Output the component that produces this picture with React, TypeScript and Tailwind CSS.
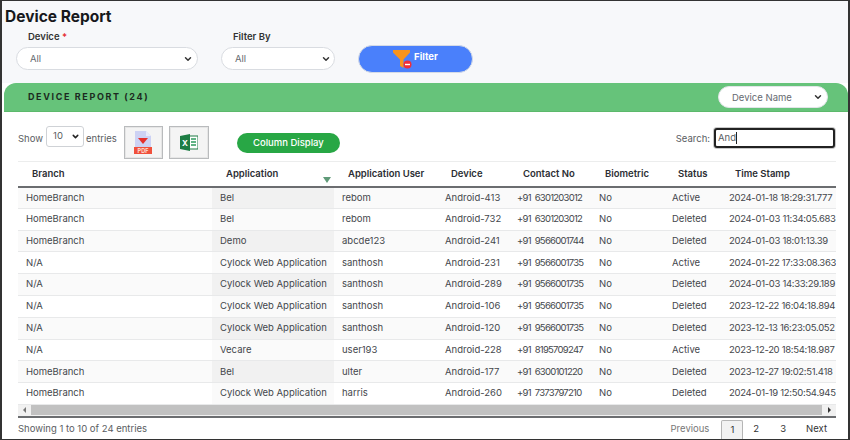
import { ChevronDown } from 'lucide-react'

const rows = [
  ['HomeBranch', 'Bel', 'rebom', 'Android-413', '+91 6301203012', 'No', 'Active', '2024-01-18 18:29:31.777'],
  ['HomeBranch', 'Bel', 'rebom', 'Android-732', '+91 6301203012', 'No', 'Deleted', '2024-01-03 11:34:05.683'],
  ['HomeBranch', 'Demo', 'abcde123', 'Android-241', '+91 9566001744', 'No', 'Deleted', '2024-01-03 18:01:13.39'],
  ['N/A', 'Cylock Web Application', 'santhosh', 'Android-231', '+91 9566001735', 'No', 'Active', '2024-01-22 17:33:08.363'],
  ['N/A', 'Cylock Web Application', 'santhosh', 'Android-289', '+91 9566001735', 'No', 'Deleted', '2024-01-03 14:33:29.189'],
  ['N/A', 'Cylock Web Application', 'santhosh', 'Android-106', '+91 9566001735', 'No', 'Deleted', '2023-12-22 16:04:18.894'],
  ['N/A', 'Cylock Web Application', 'santhosh', 'Android-120', '+91 9566001735', 'No', 'Deleted', '2023-12-13 16:23:05.052'],
  ['N/A', 'Vecare', 'user193', 'Android-228', '+91 8195709247', 'No', 'Active', '2023-12-20 18:54:18.987'],
  ['HomeBranch', 'Bel', 'ulter', 'Android-177', '+91 6300101220', 'No', 'Deleted', '2023-12-27 19:02:51.418'],
  ['HomeBranch', 'Cylock Web Application', 'harris', 'Android-260', '+91 7373797210', 'No', 'Deleted', '2024-01-19 12:50:54.945'],
]

const headers = ['Branch', 'Application', 'Application User', 'Device', 'Contact No', 'Biometric', 'Status', 'Time Stamp']
const widths = [194, 122, 103, 72, 82, 73, 57, 115]

function FakeSelect({ label, className }: { label: string; className: string }) {
  return (
    <div className={`flex items-center justify-between rounded-full border border-[#d9dce1] bg-white ${className}`}>
      <span className="pt-[2px] text-[9.5px] text-[#666a70]">{label}</span>
      <ChevronDown size={10} strokeWidth={3.5} className="text-[#333]" />
    </div>
  )
}

function FilterIcon() {
  return (
    <svg width="20" height="19" viewBox="0 0 20 19">
      <path d="M0 0h17v2.5L10.5 9.5V18L7 16V9.5L0 2.5z" fill="#f8941d" />
      <circle cx="14.5" cy="14.5" r="4" fill="#ee2e3a" />
      <rect x="12" y="13.8" width="5" height="1.4" fill="#fff" />
    </svg>
  )
}

function PdfIcon() {
  return (
    <svg width="18" height="23" viewBox="0 0 18 23">
      <path d="M1 0h11l5 5v12H1z" fill="#cdd2f4" />
      <path d="M12 0l5 5h-5z" fill="#e9ebfb" />
      <path d="M4 7h10l-5 6z" fill="#e5302c" />
      <rect x="0" y="16" width="18" height="7" fill="#f0503c" />
      <text x="9" y="22" textAnchor="middle" fontSize="5.5" fontWeight="700" fill="#fde0d8" fontFamily="Inter, sans-serif">PDF</text>
    </svg>
  )
}

function ExcelIcon() {
  return (
    <svg width="18" height="17" viewBox="0 0 18 17">
      <rect x="8" y="2" width="10" height="13" fill="#fff" stroke="#1f7a45" strokeWidth="1" />
      <path d="M11 5h5M11 8h5M11 11h5" stroke="#2e9a5d" strokeWidth="1.6" />
      <path d="M0 2l10-2v17L0 15z" fill="#1d7d44" />
      <text x="5" y="11.5" textAnchor="middle" fontSize="8" fontWeight="700" fill="#fff" fontFamily="Inter, sans-serif">X</text>
    </svg>
  )
}

export default function App() {
  return (
    <div className="h-[440px] w-[850px] overflow-hidden border-x-2 border-y border-x-[#333] border-y-[#333] bg-white font-['Inter',sans-serif] text-[#44474c]">
      {/* Filter area */}
      <div className="h-[82px] bg-[#f7f8fa]">
        <h1 className="pl-[3px] pt-[6px] text-[15.5px] font-bold leading-[20px] text-[#16181c]">Device Report</h1>
        <div className="flex">
          <div className="ml-[14px] w-[182px]">
            <div className="pl-[12px] text-[9.5px] font-semibold leading-[20px] text-[#333]">
              Device <span className="text-[#e5262b]">*</span>
            </div>
            <FakeSelect label="All" className="h-[23px] pl-[13px] pr-[4px]" />
          </div>
          <div className="ml-[23px] w-[114px]">
            <div className="pl-[12px] text-[9.5px] font-semibold leading-[20px] text-[#333]">Filter By</div>
            <FakeSelect label="All" className="h-[23px] pl-[13px] pr-[3px]" />
          </div>
          <button className="ml-[23px] mt-[18px] flex h-[28px] w-[115px] items-center justify-center gap-[1px] rounded-full border border-[#d5dbe6] bg-[#4a80fb] text-[9.5px] font-bold text-white">
            <FilterIcon />
            <span className="mb-[3px]">Filter</span>
          </button>
        </div>
      </div>

      {/* Green band */}
      <div className="ml-[2px] flex h-[29px] items-center justify-between rounded-t-[12px] border-b border-[#5cb96b] bg-[#66c37a] pl-[24px] pr-[20px]">
        <span className="text-[9px] font-bold tracking-[0.18em] text-[#1c2a20]">DEVICE REPORT (24)</span>
        <FakeSelect label="Device Name" className="h-[22px] w-[110px] border-[#e2e5e8] pl-[13px] pr-[4px]" />
      </div>

      <div className="pl-[16px] pr-[12px]">
        {/* Toolbar */}
        <div className="flex h-[49px] items-start text-[9.5px] text-[#5a5d62]">
          <span className="mt-[20px]">Show</span>
          <div className="ml-[3px] mt-[14px] flex h-[21px] w-[38px] items-center justify-between rounded-[3px] border border-[#cfd2d6] bg-white pl-[6px] pr-[3px]">
            <span>10</span>
            <ChevronDown size={9} strokeWidth={4} className="text-[#222]" />
          </div>
          <span className="ml-[2px] mt-[20px]">entries</span>
          <button className="ml-[7px] mt-[14px] flex h-[33px] w-[39px] items-center justify-center border border-[#b9bbbd] bg-[#f4f4f4] shadow-[inset_0_0_0_1px_#e6e6e6]">
            <PdfIcon />
          </button>
          <button className="ml-[6px] mt-[14px] flex h-[33px] w-[40px] items-center justify-center border border-[#b9bbbd] bg-[#f4f4f4] shadow-[inset_0_0_0_1px_#e6e6e6]">
            <ExcelIcon />
          </button>
          <button className="ml-[28px] mt-[21px] h-[20px] w-[103px] rounded-full bg-[#28a745] text-[9.5px] font-medium text-white">
            Column Display
          </button>
          <span className="ml-auto mt-[20px]">Search:</span>
          <div className="relative ml-[4px] mr-[1px] mt-[16px] h-[20px] w-[121px] rounded-[3px] border-2 border-[#222] bg-white pl-[2px] text-[9.5px] leading-[16px] shadow-[0_0_0_1px_#c9c9c9]">
            And
            <span className="absolute left-[20px] top-[2px] h-[12px] w-px bg-[#222]" />
          </div>
        </div>

        {/* Table */}
        <table className="w-[818px] table-fixed border-t border-[#eceded] text-left">
          <colgroup>
            {widths.map((w, i) => (
              <col key={i} style={{ width: w }} />
            ))}
          </colgroup>
          <thead>
            <tr className="h-[25px] border-b-2 border-[#6b6d70]">
              {headers.map((h, i) => (
                <th key={h} className="relative overflow-hidden whitespace-nowrap pl-[14px] text-[9.5px] font-semibold text-[#2c2e33]">
                  {h}
                  {i === 1 && (
                    <span className="absolute right-[3px] bottom-[3px] h-0 w-0 border-x-[4px] border-t-[6px] border-x-transparent border-t-[#5f9a78]" />
                  )}
                </th>
              ))}
            </tr>
          </thead>
          <tbody>
            {rows.map((row, r) => (
              <tr key={r} className={`h-[21.8px] border-b border-[#e8e9ea] ${r % 2 === 0 ? 'bg-[#fafafa]' : 'bg-white'}`}>
                {row.map((cell, i) => (
                  <td
                    key={i}
                    className={`overflow-hidden whitespace-nowrap pl-[8px] text-[9.5px] text-[#44474c] ${i === 1 ? (r % 2 === 0 ? 'bg-[#f1f1f1]' : 'bg-[#fafafa]') : ''} ${i === 4 ? 'tracking-[-0.75px] [word-spacing:2px]' : ''} ${i === 7 ? 'tracking-[-0.3px]' : ''}`}
                  >
                    {cell}
                  </td>
                ))}
              </tr>
            ))}
          </tbody>
        </table>

        {/* Horizontal scrollbar */}
        <div className="flex h-[13px] w-[818px] items-center border-b-2 border-[#6b6d70] bg-[#f1f1f1]">
          <span className="ml-[5px] h-0 w-0 border-y-[3px] border-r-[3px] border-y-transparent border-r-[#777]" />
          <div className="ml-[5px] h-[10px] flex-1 bg-[#c1c1c1]" />
          <span className="ml-[6px] mr-[5px] h-0 w-0 border-y-[3px] border-l-[3px] border-y-transparent border-l-[#333]" />
        </div>

        {/* Footer */}
        <div className="flex h-[21px] w-[818px] items-start text-[9.5px] text-[#5a5d62]">
          <span className="mt-[4px]">Showing 1 to 10 of 24 entries</span>
          <div className="ml-auto flex items-start">
            <span className="mt-[4px] text-[#777]">Previous</span>
            <span className="ml-[12px] mt-[2px] flex h-[19px] w-[22px] items-center justify-center rounded-t-[2px] border border-b-0 border-[#b5b5b5] bg-[#f2f2f2] text-[#333]">1</span>
            <span className="ml-[10px] mt-[4px] text-[#333]">2</span>
            <span className="ml-[21px] mt-[4px] text-[#333]">3</span>
            <span className="ml-[20px] mr-[9px] mt-[4px] text-[#333]">Next</span>
          </div>
        </div>
      </div>
    </div>
  )
}
